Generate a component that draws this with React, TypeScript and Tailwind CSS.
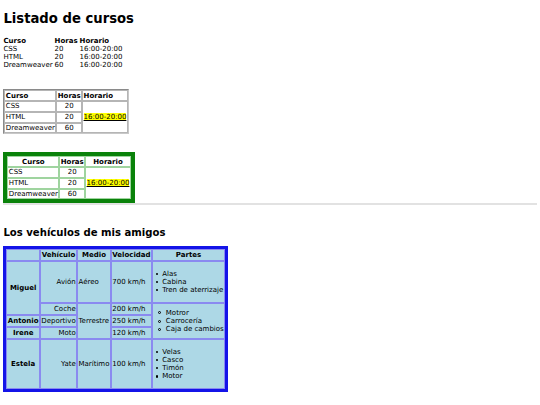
import React from "react";

const cursos = [
  { curso: "CSS", horas: 20 },
  { curso: "HTML", horas: 20 },
  { curso: "Dreamweaver", horas: 60 },
];

function Horario() {
  return <span className="bg-[#ffff00] underline">16:00-20:00</span>;
}

function Lista({ items, circle }: { items: string[]; circle?: boolean }) {
  return (
    <ul className={circle ? "my-0 pl-[5px]" : "my-[6.5px] pl-[2.5px]"}>
      {items.map((it) => (
        <li key={it} className="flex items-center">
          {circle ? (
            <span className="mr-[4.5px] h-[3px] w-[3px] shrink-0 rounded-full border-[0.8px] border-black" />
          ) : (
            <span className="mr-[4px] h-[2.4px] w-[2.4px] shrink-0 rounded-full bg-black" />
          )}
          <span>{it}</span>
        </li>
      ))}
    </ul>
  );
}

const c2 = "border border-[#b5b5b5] px-[0.4px] py-[0.3px]";
const c3 = "border border-[#9fd49f] px-[0.4px] py-[0.3px]";
const c4 = "border border-[#8a8af0] px-[0.4px] py-[1px]";

export default function App() {
  return (
    <div className="min-h-[405px] bg-white px-[3.4px] pt-px font-['DejaVu_Sans',sans-serif] text-[7px] leading-[8.15px] text-black">
      <h1 className="mt-[10px] mb-[11px] text-[13.2px] leading-[15.4px] font-bold">Listado de cursos</h1>

      {/* tabla sin bordes */}
      <table className="border-separate border-spacing-0 leading-[8px]">
        <thead>
          <tr>
            <th className="p-0 pr-[2px] text-left font-bold">Curso</th>
            <th className="p-0 pr-[2px] text-left font-bold">Horas</th>
            <th className="p-0 text-left font-bold">Horario</th>
          </tr>
        </thead>
        <tbody>
          {cursos.map((c) => (
            <tr key={c.curso}>
              <td className="p-0 pr-[2px]">{c.curso}</td>
              <td className="p-0 pr-[2px]">{c.horas}</td>
              <td className="p-0">16:00-20:00</td>
            </tr>
          ))}
        </tbody>
      </table>

      {/* tabla con borde */}
      <table className="mt-[20px] border-separate border-spacing-[0.6px] border border-[#8a8a8a] border-r-[#c8c8c8] border-b-[#c8c8c8]">
        <tbody>
          <tr>
            <th className={`${c2} text-left font-bold`}>Curso</th>
            <th className={`${c2} text-left font-bold`}>Horas</th>
            <th className={`${c2} text-left font-bold`}>Horario</th>
          </tr>
          {cursos.map((c, i) => (
            <tr key={c.curso}>
              <td className={c2}>{c.curso}</td>
              <td className={`${c2} text-center`}>{c.horas}</td>
              {i === 0 && (
                <td rowSpan={3} className={c2}>
                  <Horario />
                </td>
              )}
            </tr>
          ))}
        </tbody>
      </table>

      {/* tabla verde */}
      <table className="mt-[18px] border-separate border-spacing-[0.6px] border-[4px] border-[#0a820a]">
        <tbody>
          <tr>
            <th className={`${c3} text-center font-bold`}>Curso</th>
            <th className={`${c3} text-center font-bold`}>Horas</th>
            <th className={`${c3} text-center font-bold`}>Horario</th>
          </tr>
          {cursos.map((c, i) => (
            <tr key={c.curso}>
              <td className={c3}>{c.curso}</td>
              <td className={`${c3} text-center`}>{c.horas}</td>
              {i === 0 && (
                <td rowSpan={3} className={`${c3} text-center`}>
                  <Horario />
                </td>
              )}
            </tr>
          ))}
        </tbody>
      </table>

      <hr className="mt-0 border-t-2 border-[#e2e2e2]" />

      <h2 className="mt-[22px] mb-[7px] text-[10.1px] leading-[11.8px] font-bold">Los vehículos de mis amigos</h2>

      {/* tabla de vehículos */}
      <table className="border-separate border-spacing-[0.6px] border-[3px] border-[#1414e8] bg-[#add8e6]">
        <tbody>
          <tr>
            <th className={c4}></th>
            <th className={`${c4} font-bold`}>Vehículo</th>
            <th className={`${c4} font-bold`}>Medio</th>
            <th className={`${c4} font-bold`}>Velocidad</th>
            <th className={`${c4} font-bold`}>Partes</th>
          </tr>
          <tr>
            <th rowSpan={2} className={`${c4} font-bold`}>Miguel</th>
            <td className={`${c4} text-right`}>Avión</td>
            <td className={c4}>Aéreo</td>
            <td className={c4}>700 km/h</td>
            <td className={c4}>
              <Lista items={["Alas", "Cabina", "Tren de aterrizaje"]} />
            </td>
          </tr>
          <tr>
            <td className={`${c4} text-right`}>Coche</td>
            <td rowSpan={3} className={c4}>Terrestre</td>
            <td className={c4}>200 km/h</td>
            <td rowSpan={3} className={c4}>
              <Lista circle items={["Motror", "Carrocería", "Caja de cambios"]} />
            </td>
          </tr>
          <tr>
            <th className={`${c4} font-bold`}>Antonio</th>
            <td className={`${c4} text-right`}>Deportivo</td>
            <td className={c4}>250 km/h</td>
          </tr>
          <tr>
            <th className={`${c4} font-bold`}>Irene</th>
            <td className={`${c4} text-right`}>Moto</td>
            <td className={c4}>120 km/h</td>
          </tr>
          <tr>
            <th className={`${c4} font-bold`}>Estela</th>
            <td className={`${c4} text-right`}>Yate</td>
            <td className={c4}>Marítimo</td>
            <td className={c4}>100 km/h</td>
            <td className={c4}>
              <Lista items={["Velas", "Casco", "Timón", "Motor"]} />
            </td>
          </tr>
        </tbody>
      </table>
    </div>
  );
}
